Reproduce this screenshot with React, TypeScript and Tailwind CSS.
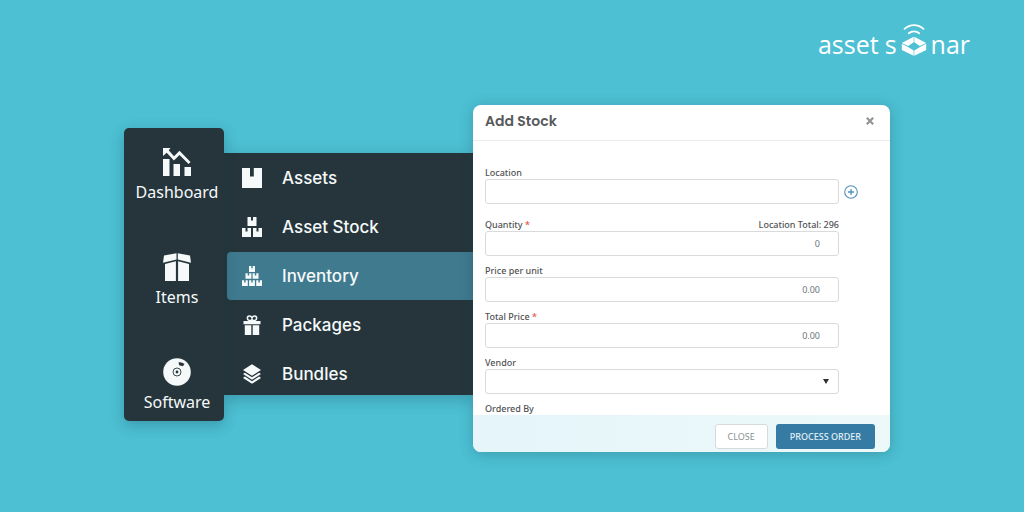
import type { ReactNode } from "react";
import clsx from "clsx";

type IconProps = {
  className?: string;
};

function DashboardIcon({ className }: IconProps) {
  return (
    <svg aria-hidden="true" className={className} fill="currentColor" viewBox="0 0 28 28">
      <path d="M0 11h6.500v17H0zM10.500 16H17v12h-6.500zM21.500 19H28v9h-6.500z" />
      <path d="M0 0h7.500L5.700 2.300 11 8.200 16.500 2.800 27.500 14l-1.900 2-9.100-9.100-5.600 5.500L3.700 4.700 0 8z" />
    </svg>
  );
}

function ItemsIcon({ className }: IconProps) {
  return (
    <svg aria-hidden="true" className={className} fill="currentColor" viewBox="0 0 28 28">
      <path d="M1 2.500 13.500.3v6.200L0 9.800zM27 2.500 14.800.3v6.200L28 9.800z" />
      <path d="M2 11 12.900 8.300V28H2zM26 11 15.100 8.300V28H26z" />
    </svg>
  );
}

function SoftwareIcon({ className }: IconProps) {
  return (
    <svg aria-hidden="true" className={className} viewBox="0 0 28 28">
      <circle cx="14" cy="14" fill="currentColor" r="13.800" />
      <circle cx="14" cy="14" fill="none" r="4" stroke="#26353b" strokeWidth="0.900" />
      <circle cx="14" cy="14" fill="#26353b" r="1.400" />
      <path d="M15.500 4.300c2-.5 4.500.3 6 1.800l-1.700 2.100-3.600-1z" fill="#26353b" />
    </svg>
  );
}

function AssetsIcon({ className }: IconProps) {
  return (
    <svg aria-hidden="true" className={className} fill="currentColor" viewBox="0 0 20 20">
      <path d="M0 0h8v8.500h3.800V0H20v20H0z" />
    </svg>
  );
}

function StockIcon({ className }: IconProps) {
  return (
    <svg aria-hidden="true" className={className} fill="currentColor" viewBox="0 0 20 20">
      <path d="M5.500 0H9v3.500h2V0h3.500v9h-9zM0 11h3.500v3.500h2V11H9v9H0zM11 11h3.500v3.500h2V11H20v9h-9z" />
    </svg>
  );
}

function InventoryIcon({ className }: IconProps) {
  return (
    <svg aria-hidden="true" className={className} fill="currentColor" viewBox="0 0 20 20">
      <path d="M7 0h2.300v2.200h1.400V0H13v6H7zM3.500 7.300h2.200v2.200h1.500V7.300h2.200v5.500H3.500zM10.600 7.300h2.200v2.200h1.500V7.300h2.200v5.500h-5.900z" />
      <path d="M0 14.200h2.200v2.200h1.400v-2.200h2.200V20H0zM7.100 14.200h2.200v2.200h1.400v-2.200h2.200V20H7.100zM14.200 14.200h2.200v2.200h1.400v-2.200H20V20h-5.800z" />
    </svg>
  );
}

function PackagesIcon({ className }: IconProps) {
  return (
    <svg aria-hidden="true" className={className} fill="currentColor" viewBox="0 0 20 20">
      <path d="M1.500 6h17v3.200h-17zM2.800 10.200h6.500V20H2.800zM10.700 10.200h6.500V20h-6.500z" />
      <path
        d="M10 4.500C8.500 6.500 5.400 5.800 5.400 3.200 5.400.5 8.800.2 10 3c1.200-2.800 4.600-2.500 4.600.2 0 2.600-3.100 3.300-4.600 1.300Z"
        fill="none"
        stroke="currentColor"
        strokeWidth="1.600"
      />
    </svg>
  );
}

function BundlesIcon({ className }: IconProps) {
  return (
    <svg aria-hidden="true" className={className} fill="currentColor" viewBox="0 0 20 20">
      <path d="m10 .2 9 5.900-9 5.700-9-5.700z" />
      <path d="m1 10 1.900-1.300 7.100 4.600 7.100-4.600L19 10l-9 5.700z" />
      <path d="m1 13.900 1.900-1.300 7.100 4.600 7.100-4.600 1.900 1.300-9 5.900z" />
    </svg>
  );
}

function LogoMark({ className }: IconProps) {
  return (
    <svg aria-hidden="true" className={className} viewBox="0 0 26 32">
      <g fill="none" stroke="currentColor" strokeLinecap="round" strokeWidth="1.800">
        <path d="M3.500 4.800C9-.2 17-.2 22.500 4.800" />
        <path d="M7.800 9.300c3-2.600 7.400-2.600 10.400 0" />
      </g>
      <g fill="currentColor">
        <path d="M12.700 12.800v5.400l-5.500 3.900L.8 19zM13.300 12.800v5.400l5.500 3.900 6.400-3.100z" />
        <path d="M.8 19.700 7 22.900l5.700 3.700v5.200L.8 26zM25.200 19.700 19 22.900l-5.700 3.700v5.200L25.200 26z" />
      </g>
    </svg>
  );
}

const sections = [
  { label: "Dashboard", Icon: DashboardIcon },
  { label: "Items", Icon: ItemsIcon },
  { label: "Software", Icon: SoftwareIcon },
];

const menuItems = [
  { label: "Assets", Icon: AssetsIcon },
  { label: "Asset Stock", Icon: StockIcon },
  { label: "Inventory", Icon: InventoryIcon, active: true },
  { label: "Packages", Icon: PackagesIcon },
  { label: "Bundles", Icon: BundlesIcon },
];

const controlClass =
  "h-[25px] w-full rounded-[3px] border border-[#d9dadb] bg-white pr-[18px] pl-2 text-right text-[9px] text-[#6b7779] outline-none";

type FieldProps = {
  id: string;
  label: string;
  required?: boolean;
  note?: string;
  action?: ReactNode;
  children: ReactNode;
};

function Field({ id, label, required, note, action, children }: FieldProps) {
  return (
    <div className="grid grid-cols-[1fr_39px] items-center">
      <div className="flex justify-between text-[9px] leading-3 font-medium text-[#505254]">
        <label htmlFor={id}>
          {label} {required ? <span className="text-[#e8504a]">*</span> : null}
        </label>
        {note ? <span>{note}</span> : null}
      </div>
      <div className="col-start-1">{children}</div>
      {action}
    </div>
  );
}

function StockDialog() {
  return (
    <section
      aria-labelledby="stock-title"
      className="z-10 min-w-0 flex-1 overflow-hidden rounded-lg bg-white shadow-[0_2px_14px_rgba(20,70,85,0.3)]"
    >
      <header className="flex h-9 items-start justify-between border-b border-[#ececec] pr-4 pl-3">
        <h1
          className="font-['Poppins','Inter',sans-serif] text-sm leading-8 font-semibold text-[#58595b]"
          id="stock-title"
        >
          Add Stock
        </h1>
        <button aria-label="Close dialog" className="flex h-8 items-center text-[#929496]" type="button">
          <svg className="size-2" fill="none" stroke="currentColor" strokeWidth="2.200" viewBox="0 0 8 8">
            <path d="m.8.8 6.400 6.400M7.200.8.800 7.200" />
          </svg>
        </button>
      </header>
      <form>
        <div className="flex flex-col gap-[9px] px-3 pt-[26px]">
          <div className="mb-[6px]">
            <Field
              action={
                <button aria-label="Add location" className="ml-[5px] w-[14px] text-[#4f92bb]" type="button">
                  <svg className="size-[14px]" fill="none" stroke="currentColor" viewBox="0 0 14 14">
                    <circle cx="7" cy="7" r="6.300" strokeWidth="1.100" />
                    <path d="M7 4v6M4 7h6" strokeWidth="1.300" />
                  </svg>
                </button>
              }
              id="location"
              label="Location"
            >
              <input className={clsx(controlClass, "block")} id="location" type="text" />
            </Field>
          </div>
          <Field id="quantity" label="Quantity" note="Location Total: 296" required>
            <input className={clsx(controlClass, "block")} defaultValue="0" id="quantity" type="text" />
          </Field>
          <Field id="unit-price" label="Price per unit">
            <input className={clsx(controlClass, "block")} defaultValue="0.00" id="unit-price" type="text" />
          </Field>
          <Field id="total-price" label="Total Price" required>
            <input className={clsx(controlClass, "block")} defaultValue="0.00" id="total-price" type="text" />
          </Field>
          <Field id="vendor" label="Vendor">
            <div className="relative">
              <select className={clsx(controlClass, "block appearance-none")} id="vendor">
                <option value="" />
              </select>
              <svg
                aria-hidden="true"
                className="pointer-events-none absolute top-[10px] right-[10px] h-[5px] w-[6px]"
                fill="#2f3133"
                viewBox="0 0 6 5"
              >
                <path d="M0 0h6L3 5z" />
              </svg>
            </div>
          </Field>
          <p className="text-[9px] leading-3 font-medium text-[#505254]">Ordered By</p>
        </div>
        <footer className="flex justify-end gap-2 bg-linear-to-r from-[#e5f5fa] to-[#edf9f9] pt-[9px] pr-[15px] pb-[3px]">
          <button
            className="h-[25px] rounded-[3px] border border-[#d6dadc] bg-white px-3 text-[9px] text-[#8b9093]"
            type="button"
          >
            CLOSE
          </button>
          <button
            className="h-[25px] rounded-[3px] bg-[#367ba3] px-[14px] text-[9px] font-medium text-[#e2f1f8]"
            type="submit"
          >
            PROCESS ORDER
          </button>
        </footer>
      </form>
    </section>
  );
}

export default function App() {
  return (
    <div className="min-h-screen bg-[#4dc0d3] font-['Noto_Sans',sans-serif]">
      <header className="flex h-[105px] justify-end pt-6 pr-[54px]">
        <a
          aria-label="assetsonar"
          className="flex h-8 items-end font-['Open_Sans',sans-serif] text-[25px] leading-6 font-normal text-white"
          href="#"
        >
          <span>asset</span>
          <span className="ml-[6px]">s</span>
          <LogoMark className="mr-1 ml-1 h-8 w-[26px]" />
          <span>nar</span>
        </a>
      </header>
      <main className="flex items-start pr-[134px] pl-[124px]">
        <nav
          aria-label="Sections"
          className="z-10 mt-[23px] flex w-[100px] shrink-0 flex-col gap-[49px] rounded-[5px] bg-[#26353b] pt-5 pb-[7px] pl-[6px] shadow-[0_4px_14px_rgba(15,60,75,0.3)]"
        >
          {sections.map(({ label, Icon }) => (
            <a className="flex flex-col items-center gap-1 text-[#f5f9fa]" href="#" key={label}>
              <Icon className="size-7" />
              <span className="text-base leading-6">{label}</span>
            </a>
          ))}
        </nav>
        <nav
          aria-label="Items menu"
          className="mt-12 flex h-[242px] w-[249px] shrink-0 flex-col gap-px bg-[#26353b] pt-px pl-[3px] shadow-[0_4px_14px_rgba(15,60,75,0.3)]"
        >
          {menuItems.map(({ label, Icon, active }) => (
            <a
              className={clsx(
                "flex h-12 shrink-0 items-center gap-5 rounded-l pl-[15px] text-[#f5f9fa]",
                active && "bg-[#407a8f]",
              )}
              href="#"
              key={label}
            >
              <Icon className="size-5" />
              <span className="font-['Inter',sans-serif] text-[17px] leading-6 font-medium">{label}</span>
            </a>
          ))}
        </nav>
        <StockDialog />
      </main>
    </div>
  );
}
